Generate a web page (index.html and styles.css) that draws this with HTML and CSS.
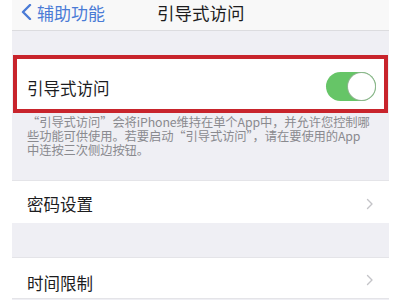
FILE: index.html
```html
<!DOCTYPE html>
<html lang="zh-CN">
<head>
<meta charset="utf-8">
<link rel="stylesheet" href="styles.css">
</head>
<body>
<div class="screen">
  <header class="nav">
    <div class="back">
      <svg class="back-chev" width="12" height="16" viewBox="0 0 12 16"><path d="M10 1 L3 8 L10 15" fill="none" stroke="#4a7bd6" stroke-width="2.4" stroke-linecap="round" stroke-linejoin="round"/></svg>
      <span>辅助功能</span>
    </div>
    <div class="title">引导式访问</div>
  </header>
  <div class="gap-top"></div>
  <div class="highlight">
    <div class="row toggle-row">
      <span class="label">引导式访问</span>
      <span class="switch"><span class="knob"></span></span>
    </div>
  </div>
  <p class="desc">“引导式访问”会将iPhone维持在单个App中，并允许您控制哪<br>些功能可供使用。若要启动“引导式访问”，请在要使用的App<br>中连按三次侧边按钮。</p>
  <div class="row link-row first">
    <span class="label">密码设置</span>
    <svg class="chev" width="8" height="12" viewBox="0 0 8 12"><path d="M1.5 1.5 L6 6 L1.5 10.5" fill="none" stroke="#c4c4c8" stroke-width="1.4" stroke-linecap="round" stroke-linejoin="round"/></svg>
  </div>
  <div class="gap-mid"></div>
  <div class="row link-row second">
    <span class="label">时间限制</span>
    <svg class="chev" width="8" height="12" viewBox="0 0 8 12"><path d="M1.5 1.5 L6 6 L1.5 10.5" fill="none" stroke="#c4c4c8" stroke-width="1.4" stroke-linecap="round" stroke-linejoin="round"/></svg>
  </div>
</div>
</body>
</html>
```
FILE: styles.css
```css
html, body {
  margin: 0;
  padding: 0;
  background: #ffffff;
  height: 300px;
  overflow: hidden;
}
body {
  font-family: "Noto Sans CJK SC", "Noto Sans", sans-serif;
}
.screen {
  margin: 0 11px 0 12px;
  background: #efeff4;
  height: 300px;
  display: flex;
  flex-direction: column;
}
.nav {
  height: 31px;
  background: #f8f8f8;
  border-bottom: 1px solid #dcdcdf;
  box-sizing: border-box;
  display: flex;
  align-items: flex-start;
  position: relative;
}
.back {
  display: flex;
  align-items: center;
  margin-left: 8px;
  color: #4a7bd6;
  font-size: 17px;
  line-height: 25px;
}
.back-chev {
  margin-right: 5px;
  margin-top: -2px;
}
.title {
  position: absolute;
  left: 145px;
  top: 0;
  font-size: 17.5px;
  line-height: 25px;
  color: #1c1c1e;
}
.gap-top {
  height: 24px;
}
.highlight {
  margin-left: 1px;
  margin-right: 1px;
  border: 4.5px solid #c8242c;
  background: #ffffff;
}
.row {
  display: flex;
  align-items: center;
  justify-content: space-between;
  background: #ffffff;
}
.label {
  font-size: 16.5px;
  color: #1c1c1e;
  line-height: 20px;
}
.toggle-row {
  height: 50px;
  padding: 0 8px 0 10px;
}
.toggle-row .label {
  margin-top: 8px;
}
.switch {
  width: 50px;
  height: 29px;
  border-radius: 15px;
  background: #66c567;
  position: relative;
  margin-top: 4px;
}
.knob {
  position: absolute;
  right: 1px;
  top: 1px;
  width: 27px;
  height: 27px;
  border-radius: 50%;
  background: #ffffff;
  box-shadow: 0 0 0 1px #8fb58f;
}
.desc {
  margin: 0;
  padding: 2px 0 0 15px;
  height: 65px;
  font-size: 12.3px;
  line-height: 14px;
  color: #8a8a8f;
  letter-spacing: -0.1px;
  white-space: nowrap;
}
.link-row {
  padding: 0 15px 0 15px;
}
.link-row.first {
  height: 42px;
  border-top: 1px solid #e4e4e8;
}
.link-row.first .label {
  margin-top: 4px;
}
.gap-mid {
  height: 34px;
}
.link-row.second {
  height: 40px;
  border-top: 1px solid #e4e4e8;
  border-bottom: 1px solid #e4e4e8;
}
.link-row.second .label {
  margin-top: 10px;
}
.chev {
  margin-top: 4px;
}
```
